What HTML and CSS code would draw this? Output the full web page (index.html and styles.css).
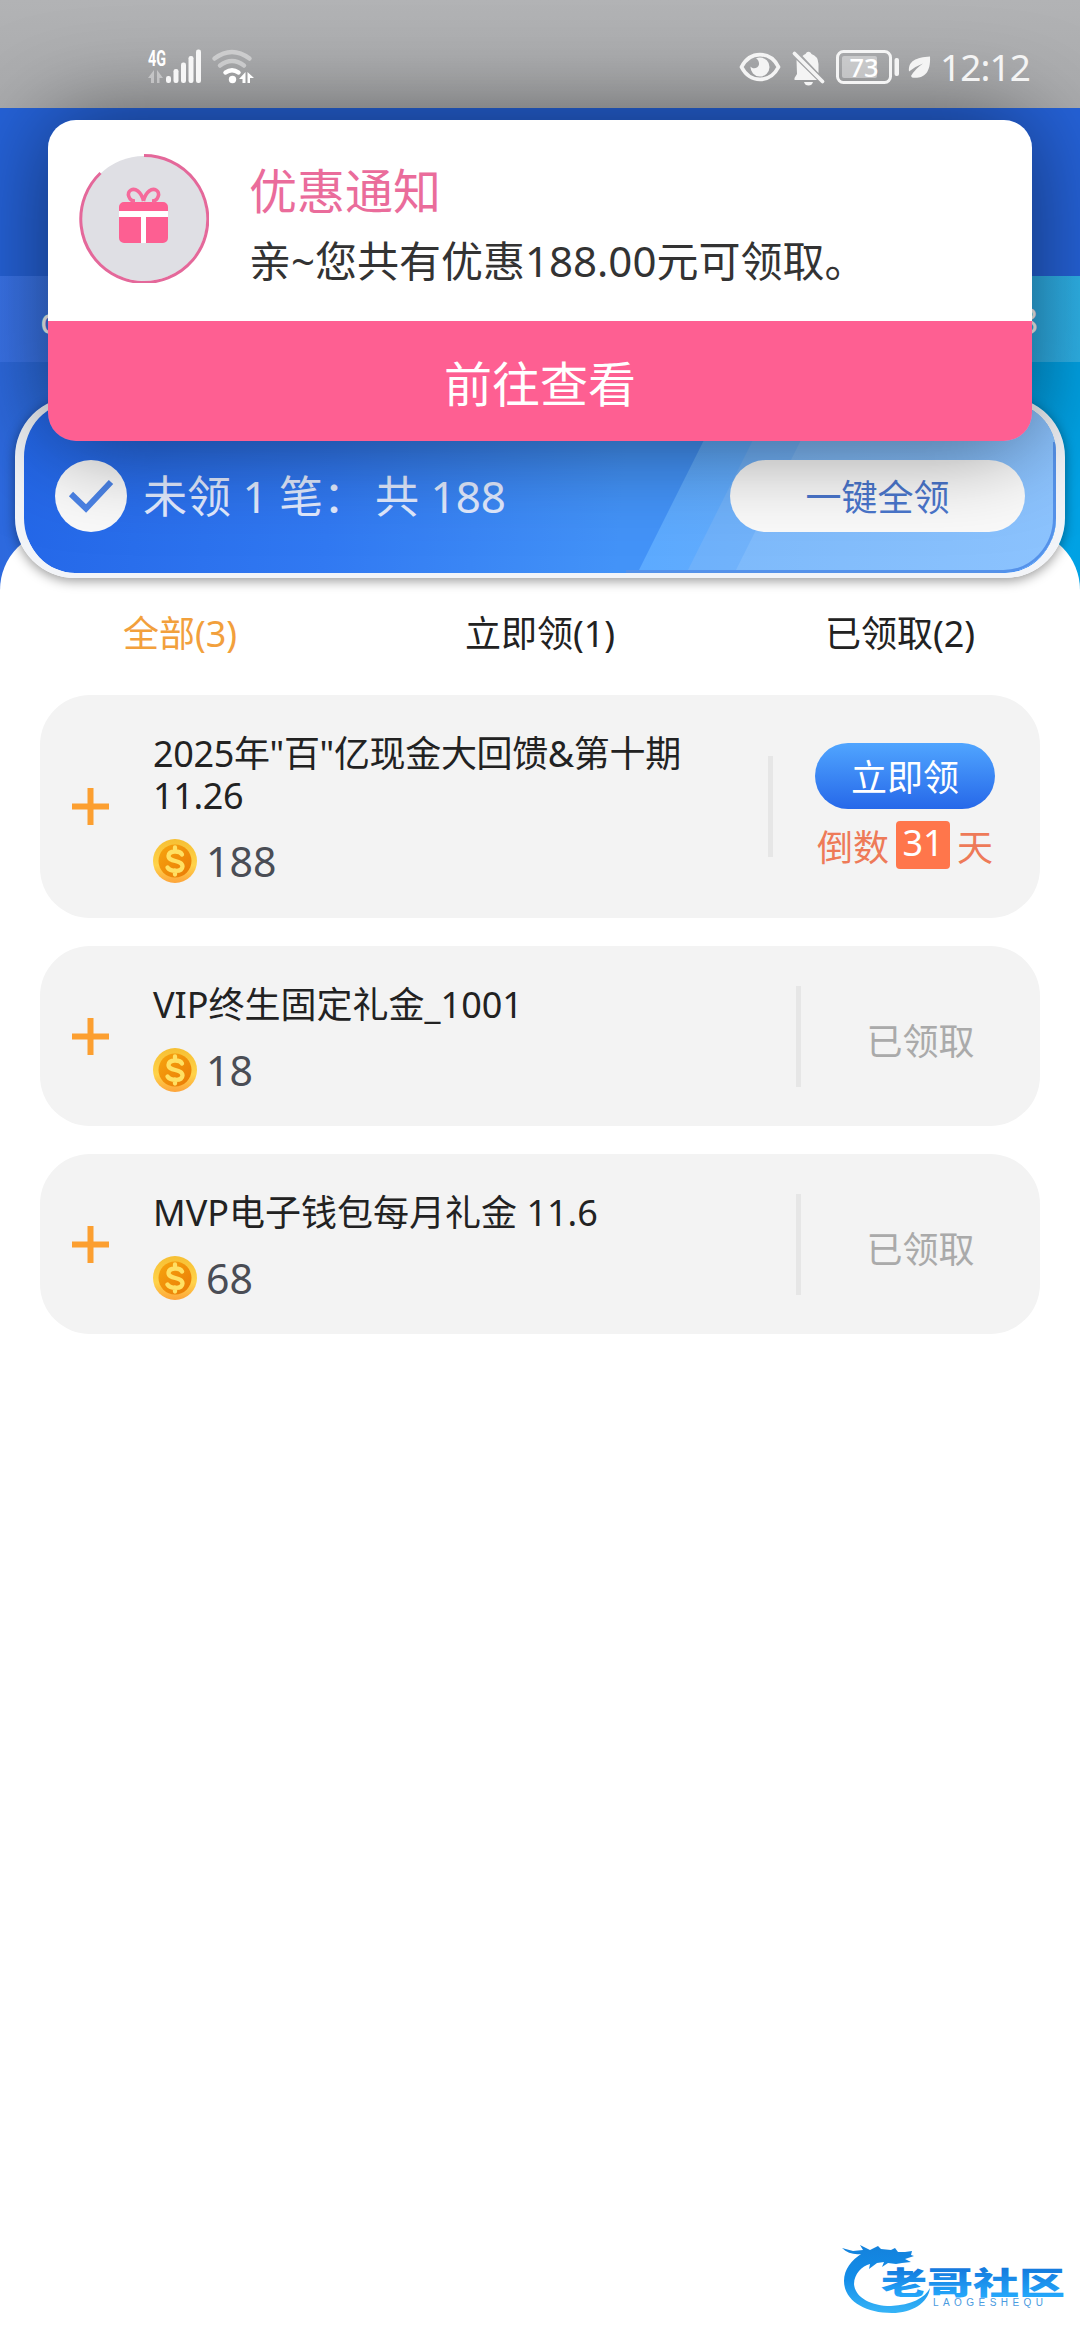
FILE: index.html
```html
<!DOCTYPE html>
<html lang="zh-CN">
<head>
<meta charset="utf-8">
<title>优惠</title>
<link rel="stylesheet" href="styles.css">
</head>
<body>
<div class="screen">
  <div class="status">
    <div class="status-group">
      <svg class="signal" width="56" height="38" viewBox="0 0 56 38">
        <text x="0" y="17.500" class="net" textLength="18" lengthAdjust="spacingAndGlyphs">4G</text>
        <path d="M6 22v13H3v-5H0zM9 22v13h2.500v-5H15z" fill="#fff" opacity=".4"/>
        <g fill="#f6f6f6"><rect x="18" y="28" width="5" height="7" rx="2.200"/><rect x="25.500" y="21" width="5" height="14" rx="2.200"/><rect x="33" y="14.500" width="5" height="20.500" rx="2.200"/><rect x="40.500" y="8" width="5" height="27" rx="2.200"/><rect x="48" y="1.500" width="5" height="33.500" rx="2.200"/></g>
      </svg>
      <svg width="44" height="38" viewBox="0 0 44 38">
        <g fill="none" stroke-linecap="round" stroke-width="4.500" stroke="#fff">
          <path d="M3.500 10.500Q21 -2.500 38.500 10.500" opacity=".42"/>
          <path d="M9 17.500Q21 8.500 33 17.500" opacity=".42"/>
          <path d="M14.500 24.500Q21 20 27.500 24.500"/>
        </g>
        <circle cx="21.500" cy="31.500" r="3.700" fill="#fff"/>
        <path d="M34.500 24v11h-3v-4H28zM36.500 24v11h2.500v-5h4z" fill="#fff"/>
      </svg>
    </div>
    <div class="status-group right">
      <svg class="eye" width="42" height="30" viewBox="0 0 42 30">
        <path d="M2.500 15C11-1.500 31-1.500 39.500 15C31 31.500 11 31.500 2.500 15z" fill="none" stroke="#f4f4f4" stroke-width="3.800" stroke-linejoin="round"/>
        <path d="M21 5.500a9.500 9.500 0 1 1-9.500 9c2 3 8 2 8.500-2 .3-3-1-5-3-6a9 9 0 0 1 4-1z" fill="#f4f4f4"/>
      </svg>
      <svg class="bell" width="33" height="36" viewBox="0 0 33 36">
        <path d="M4.500 10L25 30H2.500v-2l2.500-4zM10.500 6q1.500-1.500 3-2 1.500-3 4-2 1.500.5 2 2 6.500 2 7 10v9zM12 32h9q-1 3.500-4.500 3.500T12 32z" fill="#f4f4f4"/>
        <path d="M2.500 3.500l28 28" stroke="#f4f4f4" stroke-width="3.800" stroke-linecap="round"/>
      </svg>
      <svg class="battery" width="63" height="34" viewBox="0 0 63 34">
        <rect x="1.500" y="1.500" width="53" height="31" rx="6" fill="none" stroke="#f4f4f4" stroke-width="3"/>
        <rect x="6" y="6" width="35" height="22" rx="2" fill="#fff" opacity=".4"/>
        <rect x="58.500" y="8" width="4.500" height="18" rx="2" fill="#f4f4f4"/>
        <text x="28" y="26.500" class="pct" textLength="29" lengthAdjust="spacingAndGlyphs">73</text>
      </svg>
      <svg class="leaf" width="23" height="23" viewBox="0 0 23 23">
        <path d="M22 .5C8 1.500 0 5 1 15.500Q8 10 15 7.500 7 13 3 20l1 1.500C14 23 23 19 22 .5z" fill="#f4f4f4"/>
      </svg>
      <svg class="clock" width="88" height="34" viewBox="0 0 88 34"><text x="-2" y="30.500" textLength="91">12:12</text></svg>
    </div>
  </div>
  <div class="topbar"></div>
  <div class="hero">
    <div class="ticker"><span>c</span><span>8</span></div>
    <div class="summary">
      <svg class="streaks" width="620" height="171" viewBox="0 0 620 171">
        <defs>
          <linearGradient id="s1" x1="0" y1="0" x2="1" y2="0"><stop offset="0" stop-color="#5caaff"/><stop offset="1" stop-color="#74b4fb"/></linearGradient>
          <linearGradient id="s2" x1="0" y1="0" x2="1" y2="0"><stop offset="0" stop-color="#6eb1fb"/><stop offset="1" stop-color="#80bbfb"/></linearGradient>
          <linearGradient id="s3" x1="0" y1="0" x2="1" y2="0"><stop offset="0" stop-color="#7ebafb"/><stop offset="1" stop-color="#8cc3fe"/></linearGradient>
        </defs>
        <path d="M203 168L287 0H620V168z" fill="url(#s1)"/>
        <path d="M252 168L336 0H620V168z" fill="url(#s2)"/>
        <path d="M300 168L384 0H620V168z" fill="url(#s3)"/>
        <path d="M618.500 40v75a51 54 0 0 1-51 54.500H190" fill="none" stroke="#5592ea" stroke-width="3"/>
      </svg>
      <svg class="check" width="72" height="72" viewBox="0 0 72 72"><circle cx="36" cy="36" r="36" fill="#fafafa"/><path d="M16 34L31 48.500 56 22" fill="none" stroke="#4b83e6" stroke-width="6"/></svg>
      <div class="summary-text">未领 1 笔：<span class="total">共 188</span></div>
      <div class="claim-all">一键全领</div>
    </div>
  </div>
  <div class="sheet">
    <div class="tabs"><div class="tab active">全部(3)</div><div class="tab">立即领(1)</div><div class="tab">已领取(2)</div></div>
    <div class="cards">
      <div class="card tall">
        <svg class="plus" width="37" height="37" viewBox="0 0 37 37"><path d="M18.500 0v37M0 18.500h37" stroke="#fc9f30" stroke-width="6"/></svg>
        <div class="info">
          <div class="title long">2025年"百"亿现金大回馈&amp;第十期<br>11.26</div>
          <div class="amount"><svg class="coin" width="44" height="44" viewBox="0 0 44 44"><use href="#coin"/></svg>188</div>
        </div>
        <div class="rule"></div>
        <div class="action">
          <div class="claim">立即领</div>
          <div class="countdown">倒数<span class="days">31</span>天</div>
        </div>
      </div>
      <div class="card">
        <svg class="plus" width="37" height="37" viewBox="0 0 37 37"><path d="M18.500 0v37M0 18.500h37" stroke="#fc9f30" stroke-width="6"/></svg>
        <div class="info">
          <div class="title">VIP终生固定礼金_1001</div>
          <div class="amount"><svg class="coin" width="44" height="44" viewBox="0 0 44 44"><use href="#coin"/></svg>18</div>
        </div>
        <div class="rule"></div>
        <div class="action done">已领取</div>
      </div>
      <div class="card">
        <svg class="plus" width="37" height="37" viewBox="0 0 37 37"><path d="M18.500 0v37M0 18.500h37" stroke="#fc9f30" stroke-width="6"/></svg>
        <div class="info">
          <div class="title">MVP电子钱包每月礼金 11.6</div>
          <div class="amount"><svg class="coin" width="44" height="44" viewBox="0 0 44 44"><use href="#coin"/></svg>68</div>
        </div>
        <div class="rule"></div>
        <div class="action done">已领取</div>
      </div>
    </div>
  </div>

  <div class="notice">
    <div class="notice-body">
      <svg width="130" height="130" viewBox="0 0 130 130">
        <circle cx="65" cy="65.500" r="62.500" fill="#dfdfe4"/>
        <path d="M65 2.500A63.500 63.500 0 1 1 21.500 20" fill="none" stroke="#e4689a" stroke-width="3"/>
        <path d="M40 54a5 5 0 0 1 5-5h39a5 5 0 0 1 5 5v4H40zM40 64h22v26H45a5 5 0 0 1-5-5zM67 64h22v21a5 5 0 0 1-5 5H67z" fill="#fd5f92"/>
        <path d="M40 58h49v6H67v26h-5V64H40z" fill="#fff"/>
        <path d="M64.500 48C62 38 56 35 52 37c-5 3-2 11 4 11M64.500 48C67 38 73 35 77 37c5 3 2 11-4 11" fill="none" stroke="#f56a9b" stroke-width="3.500"/>
      </svg>
      <div class="notice-copy"><div class="notice-title">优惠通知</div><div class="notice-text">亲~您共有优惠188.00元可领取。</div></div>
    </div>
    <div class="notice-button">前往查看</div>
  </div>

  <svg class="watermark" width="260" height="120" viewBox="0 0 260 120">
    <defs>
      <linearGradient id="wm" gradientUnits="userSpaceOnUse" x1="0" y1="26" x2="0" y2="93"><stop offset="0" stop-color="#1482dc"/><stop offset=".5" stop-color="#138de9"/><stop offset="1" stop-color="#36b4f7"/></linearGradient>
      <linearGradient id="wt" gradientUnits="userSpaceOnUse" x1="0" y1="47" x2="0" y2="77"><stop offset="0" stop-color="#1478dc"/><stop offset="1" stop-color="#24a8fb"/></linearGradient>
    </defs>
    <path d="M22 28l11 3 10-1-3-5 10 5 8-4 3 3 10 1 4-2 3 4 7 0 7-1-1 4 3 1-9 3 6 3-9 1-6 1-8-1-6 4 2-5-7 1-8 6 1-5C42 46 34 54 34 64c1 13 16 22 37 22 20-1 34-8 39-18C108 83 92 93 72 93 44 93 24 80 24 61c0-12 8-21 17-27-7 1-14-1-19-6z" fill="url(#wm)"/>
    <text x="61" y="73.500" class="wm-name" textLength="184" lengthAdjust="spacingAndGlyphs" fill="url(#wt)">老哥社区</text>
    <text x="113" y="86" class="wm-sub" textLength="110" lengthAdjust="spacing">LAOGESHEQU</text>
  </svg>

  <svg class="defs" width="0" height="0">
    <defs>
      <linearGradient id="rim" x1="0" y1="0" x2="0" y2="1"><stop offset="0" stop-color="#f6bf33"/><stop offset=".6" stop-color="#ffd34a"/><stop offset="1" stop-color="#fda43a"/></linearGradient>
      <linearGradient id="face" x1="0" y1="0" x2="1" y2="1"><stop offset="0" stop-color="#f7a50e"/><stop offset="1" stop-color="#e97a06"/></linearGradient>
      <g id="coin">
        <circle cx="22" cy="22" r="22" fill="url(#rim)"/>
        <circle cx="22" cy="22" r="16.500" fill="url(#face)"/>
        <path d="M29 15.500C27 11.500 16 11 15.500 17c0 6.500 14 3.500 14 10.500-.5 6-12 5.500-15 1M22 8.500v4M22 31.500v4" fill="none" stroke="#ffe063" stroke-width="4.300" stroke-linecap="round"/>
      </g>
    </defs>
  </svg>
</div>
</body>
</html>
```
FILE: styles.css
```css
* { box-sizing: border-box; }
body { margin: 0; font-family: "Noto Sans", "Noto Sans CJK SC", sans-serif; background: #fff; }
svg { display: block; flex: none; }
.screen { position: relative; width: 1080px; height: 2340px; overflow: hidden; background: linear-gradient(#b2b3b5, #aaabad) top / 100% 108px no-repeat #fff; }

.status { height: 108px; display: flex; justify-content: space-between; padding: 48px 50px 0 148px; position: relative; z-index: 5; }
.status svg { overflow: visible; }
.status-group { display: flex; height: 38px; gap: 7px; }
.status-group.right { gap: 0; align-items: flex-start; }
.net { font: 700 22px "Roboto", sans-serif; fill: #fff; }
.eye { margin: 4px 11px 0 0; }
.bell { margin: 2px 11px 0 0; }
.battery { margin: 2px 9px 0 0; }
.pct { font: 500 26px "Noto Sans", sans-serif; text-anchor: middle; fill: #fff; }
.leaf { margin: 8px 11px 0 0; }
.clock { margin-top: 2px; font: 400 37px "Noto Sans", sans-serif; fill: #f4f4f4; }

.topbar { height: 168px; background: #2562d8; }
.hero { height: 314px; background: linear-gradient(90deg, #2d69de, #00a2e4); }
.ticker { height: 86px; padding: 4px 42px 0 40px; display: flex; justify-content: space-between; align-items: center; font-size: 36px; line-height: 50px; color: #fff; background: linear-gradient(90deg, rgba(70,125,245,.5), rgba(255,255,255,.18)); }
.summary { position: relative; z-index: 1; height: 181px; margin: 35px 15px 0; padding: 16px 31px 0 31px; display: flex; align-items: center; border: 9px solid #f2f4f8; border-bottom-width: 5px; border-top-width: 5px; border-radius: 60px; background: linear-gradient(95deg, #2467e8 0%, #3179f2 30%, #4393f8 58%, #4393f8 100%) padding-box; box-shadow: 0 3px 12px rgba(0,0,0,.4); }
.streaks { position: absolute; right: 0; top: 0; border-radius: 0 51px 55px 0; }
.check { position: relative; }
.summary-text { margin-left: 16px; flex: 1; font-size: 44px; line-height: 60px; color: #e2ebff; position: relative; white-space: nowrap; }
.total { margin-left: 8px; }
.claim-all { position: relative; width: 295px; height: 72px; border-radius: 36px; background: #fafafa; color: #4a76cc; font-size: 36px; line-height: 75px; text-align: center; }

.sheet { margin-top: -60px; padding-top: 74px; border-radius: 60px 60px 0 0; background: #fff; }
.tabs { display: grid; grid-template-columns: repeat(3, 1fr); text-align: center; font-size: 36px; line-height: 60px; color: #222; }
.tab.active { color: #f2a03c; }
.cards { margin: 31px 40px 0; display: flex; flex-direction: column; gap: 28px; }
.card { height: 180px; padding: 0 0 0 32px; border-radius: 50px; background: #f3f3f3; display: flex; align-items: center; }
.card.tall { height: 223px; }
.info { align-self: flex-start; margin: 38px 0 0 44px; flex: 1; }
.title { font-size: 36px; line-height: 42px; color: #222; white-space: nowrap; }
.title.long { letter-spacing: -.35px; }
.amount { margin-top: 22px; display: flex; align-items: center; gap: 9px; height: 44px; font-size: 41px; line-height: 44px; color: #4a4d55; }
.rule { width: 5px; height: 101px; background: #e6e6e6; }
.action { width: 239px; }
.tall .action { width: 267px; padding-left: 42px; align-self: flex-start; margin-top: 48px; }
.done { text-align: center; font-size: 36px; line-height: 50px; padding-top: 11px; color: #aaa; }
.claim { width: 180px; height: 66px; border-radius: 33px; background: linear-gradient(#50a5ff, #2668e9); color: #fff; font-size: 36px; line-height: 70px; text-align: center; }
.countdown { display: flex; width: 180px; margin-top: 12px; height: 48px; justify-content: center; gap: 7px; font-size: 36px; line-height: 53px; color: #ee7a58; white-space: nowrap; }
.days { width: 54px; background: #ff764b; border-radius: 4px; color: #fff; text-align: center; font-size: 36px; line-height: 43px; }

.notice { position: absolute; z-index: 3; left: 48px; top: 120px; width: 984px; height: 321px; border-radius: 28px; box-shadow: 0 0 96px rgba(0,0,0,.52); }
.notice-body { height: 201px; padding: 33px 0 0 31px; display: flex; gap: 40px; background: #fff; border-radius: 28px 28px 0 0; }
.notice-copy { padding-top: 8px; }
.notice-title { font-size: 48px; line-height: 60px; color: #ea6c9b; }
.notice-text { font-size: 42px; line-height: 56px; margin-top: 12px; color: #333; white-space: nowrap; }
.notice-button { height: 120px; background: #fe5f92; border-radius: 0 0 28px 28px; color: #fff; font-size: 48px; line-height: 126px; text-align: center; }

.watermark { position: absolute; left: 820px; top: 2220px; }
.wm-name { font: 900 31px "Noto Sans CJK SC", sans-serif; }
.wm-sub { font: 400 10px "Liberation Sans", sans-serif; fill: #4b9be0; }
.defs { position: absolute; }
```
